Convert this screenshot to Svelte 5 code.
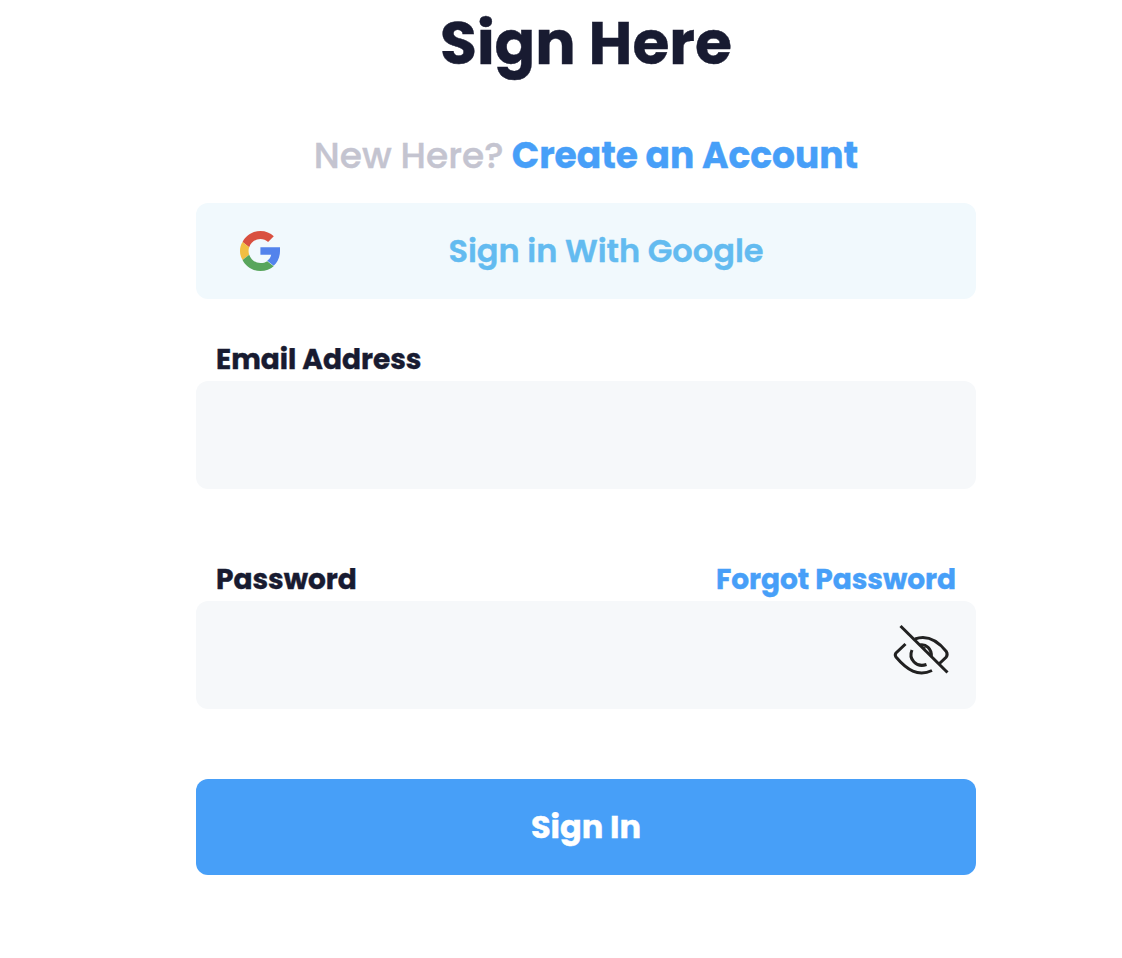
<script>
	let email = $state('');
	let password = $state('');
	let showPassword = $state(false);
</script>

<svelte:head>
	<title>Sign Here</title>
</svelte:head>

<main>
	<h1>Sign Here</h1>
	<p class="subtitle">
		<span class="muted">New Here?</span>
		<a href="#create">Create an Account</a>
	</p>

	<button type="button" class="google">
		<svg viewBox="0 0 48 48" width="40" height="40" aria-hidden="true">
			<path fill="#d95040" d="M24.5 9.5c3.54 0 6.71 1.22 9.21 3.6l6.85-6.85C36.4 2.38 30.97 0 24.5 0 15.12 0 7.01 5.38 3.06 13.22l7.98 6.19C12.93 13.72 18.24 9.5 24.5 9.5z" />
			<path fill="#5383ec" d="M48 19.6H24.5v9.02h12.94c-.58 2.96-2.26 5.48-4.78 7.18l7.73 6C44.9 37.6 48 31.5 48 24z" />
			<path fill="#f2be42" d="M11.03 28.59c-.48-1.45-.76-2.99-.76-4.59s.27-3.14.76-4.59l-7.98-6.19C.92 16.46 0 20.12 0 24c0 3.88.92 7.54 3.06 10.78l7.97-6.19z" />
			<path fill="#58a55c" d="M24.5 48c6.48 0 11.93-2.13 15.89-5.81l-7.73-6c-2.15 1.45-4.92 2.3-8.16 2.3-6.26 0-11.57-4.22-13.47-9.91l-7.98 6.19C7.01 42.62 15.12 48 24.5 48z" />
		</svg>
		<span class="google-text">Sign in With Google</span>
	</button>

	<form onsubmit={(e) => e.preventDefault()}>
		<div class="labels">
			<label for="email">Email Address</label>
		</div>
		<div class="field">
			<input id="email" type="email" bind:value={email} />
		</div>

		<div class="labels second">
			<label for="password">Password</label>
			<a href="#forgot">Forgot Password</a>
		</div>
		<div class="field">
			<input id="password" type={showPassword ? 'text' : 'password'} bind:value={password} />
			<button type="button" class="eye" aria-label="Toggle password" onclick={() => (showPassword = !showPassword)}>
				<svg viewBox="0 0 60 56" width="60" height="56" fill="none" stroke="#212121" stroke-width="3">
					<path d="M9.5 5 56.5 51.5" />
					<path d="M14.5 23 5 32Q3.5 34 5 36C16 49 27 56 41 49.5" />
					<path d="M24 18C35 14 46 19 55.3 30.5Q57 33.5 55.3 36L48.5 42.5" />
					<path d="M21 29C17 38 25.5 47 35.5 43.5" />
					<path d="M28.5 24C35 22.5 41 28 40.3 35.5" />
					<path d="M31 26.5 34.5 27M37.3 31 38.5 33.5" stroke-width="1.5" />
				</svg>
			</button>
		</div>

		<button type="submit" class="submit">Sign In</button>
	</form>
</main>

<style>
	:global(body) {
		background: #fff;
	}

	main {
		width: 780px;
		margin-left: 196px;
		font-family: Poppins, Inter, sans-serif;
		color: #181b31;
		-webkit-text-stroke: 0.4px currentColor;
	}

	h1 {
		margin: 0;
		font-size: 60px;
		line-height: 87px;
		font-weight: 700;
		text-align: center;
	}

	.subtitle {
		margin: 44px 0 22px;
		font-size: 36px;
		line-height: 50px;
		text-align: center;
		white-space: nowrap;
		word-spacing: -0.5px;
	}

	.muted {
		margin-right: -1px;
		color: #c4c4d0;
		font-weight: 500;
	}

	a {
		color: #479ff8;
		font-weight: 700;
		text-decoration: none;
		word-spacing: 0;
	}

	button {
		border: 0;
		font-family: inherit;
		cursor: pointer;
	}

	.google {
		display: flex;
		align-items: center;
		width: 100%;
		height: 96px;
		padding: 0 44px;
		border-radius: 12px;
		background: #f1f9fd;
	}

	.google-text {
		flex: 1;
		color: #63bbf0;
		font-size: 32px;
		font-weight: 600;
	}

	.labels {
		display: flex;
		justify-content: space-between;
		margin-top: 38px;
		padding: 2px 20px 0;
		font-size: 28px;
		line-height: 42px;
		font-weight: 700;
	}

	.second {
		margin-top: 68px;
	}

	.field {
		display: flex;
		align-items: center;
		height: 108px;
		border-radius: 12px;
		background: #f6f8fa;
	}

	input {
		flex: 1;
		min-width: 0;
		height: 100%;
		box-sizing: border-box;
		padding: 0 24px;
		border: 0;
		outline: 0;
		background: transparent;
		font: inherit;
		font-size: 30px;
	}

	.eye {
		display: flex;
		margin: 0 25px 12px 0;
		padding: 0;
		background: none;
	}

	.submit {
		width: 100%;
		height: 96px;
		margin-top: 70px;
		border-radius: 12px;
		background: #479ff8;
		color: #fff;
		font-size: 32px;
		font-weight: 700;
	}
</style>
